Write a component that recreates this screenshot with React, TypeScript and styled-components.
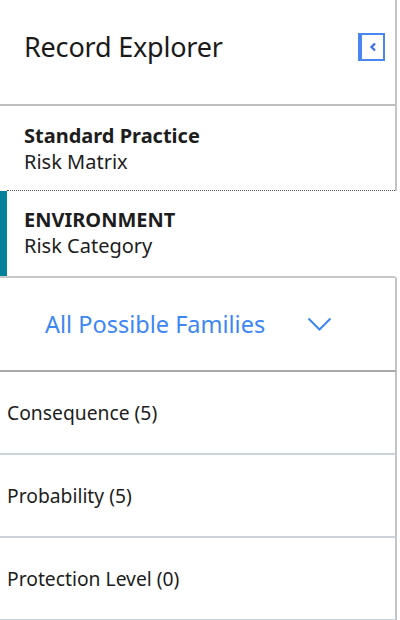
import React from 'react'
import styled, { createGlobalStyle } from 'styled-components'

const GlobalStyle = createGlobalStyle`
  html, body {
    margin: 0;
    padding: 0;
    background: #ffffff;
  }
  body {
    font-family: "Noto Sans", "Open Sans", sans-serif;
    color: #1d1d1d;
  }
`

const families = ['Consequence (5)', 'Probability (5)', 'Protection Level (0)']

const App = () => {
  return (
    <>
      <GlobalStyle />
      <Panel>
        <Header>
          <Title>Record Explorer</Title>
          <CollapseButton aria-label="Collapse">
            <svg width="8" height="10" viewBox="0 0 8 10">
              <path d="M6 1.5 L2.5 5 L6 8.5" fill="none" stroke="#3b6fe8" strokeWidth="2.2" />
            </svg>
          </CollapseButton>
        </Header>

        <Crumb $dotted>
          <CrumbTitle>Standard Practice</CrumbTitle>
          <CrumbSub>Risk Matrix</CrumbSub>
        </Crumb>
        <Crumb $selected>
          <CrumbTitle>ENVIRONMENT</CrumbTitle>
          <CrumbSub>Risk Category</CrumbSub>
        </Crumb>

        <FamilySelect>
          <FamilyLabel>All Possible Families</FamilyLabel>
          <svg width="25" height="14" viewBox="0 0 25 14">
            <path d="M1.5 1.5 L12.5 12.5 L23.5 1.5" fill="none" stroke="#3d87f5" strokeWidth="2" />
          </svg>
        </FamilySelect>

        <FamilyList>
          {families.map((f) => (
            <FamilyItem key={f}>{f}</FamilyItem>
          ))}
        </FamilyList>
      </Panel>
    </>
  )
}

export default App

const Panel = styled.div`
  width: 397px;
  height: 620px;
  display: flex;
  flex-direction: column;
  overflow: hidden;
`

const Header = styled.header`
  height: 106px;
  display: flex;
  align-items: center;
  justify-content: space-between;
  padding: 0 10px 12px 24px;
  box-sizing: border-box;
  border-right: 2px solid #c4c4c4;
  border-bottom: 2px solid #bdbdbd;
  flex-shrink: 0;
`

const Title = styled.h1`
  margin: 0;
  font-size: 27px;
  font-weight: 400;
  color: #1a1a1a;
  letter-spacing: -0.2px;
`

const CollapseButton = styled.button`
  width: 27px;
  height: 28px;
  padding: 0;
  margin-top: 2px;
  box-sizing: border-box;
  display: flex;
  align-items: center;
  justify-content: center;
  background: #fff;
  border: 2px solid #4a86f0;
  border-left-width: 4px;
  cursor: pointer;
`

const Crumb = styled.div<{ $selected?: boolean; $dotted?: boolean }>`
  position: relative;
  height: ${(p) => (p.$selected ? '87px' : '85px')};
  padding: 0 0 ${(p) => (p.$selected ? '2px' : '0')} 24px;
  box-sizing: border-box;
  display: flex;
  flex-direction: column;
  justify-content: center;
  border-right: 2px solid ${(p) => (p.$selected ? 'transparent' : '#c4c4c4')};
  border-bottom: ${(p) => (p.$selected ? '2px solid #c8c8c8' : 'none')};
  flex-shrink: 0;

  ${(p) =>
    p.$dotted &&
    `
    &::after {
      content: '';
      position: absolute;
      left: 7px;
      right: 0;
      bottom: 0;
      border-bottom: 1px dotted #555;
    }
  `}

  ${(p) =>
    p.$selected &&
    `
    &::before {
      content: '';
      position: absolute;
      left: 0;
      top: 0;
      bottom: 0;
      width: 7px;
      background: #06809b;
    }
  `}
`

const CrumbTitle = styled.div`
  font-size: 20px;
  font-weight: 700;
  line-height: 26px;
  color: #1d1d1d;
`

const CrumbSub = styled.div`
  font-size: 20px;
  font-weight: 400;
  line-height: 26px;
  color: #1d1d1d;
`

const FamilySelect = styled.div`
  height: 94px;
  display: flex;
  align-items: center;
  padding: 0 0 0 45px;
  gap: 42px;
  box-sizing: border-box;
  border-right: 2px solid #c4c4c4;
  border-bottom: 2px solid #a9a9a9;
  flex-shrink: 0;
`

const FamilyLabel = styled.span`
  font-size: 23.5px;
  color: #3d87f5;
`

const FamilyList = styled.div`
  display: flex;
  flex-direction: column;
`

const FamilyItem = styled.div`
  height: 83px;
  display: flex;
  align-items: center;
  padding-left: 7px;
  box-sizing: border-box;
  font-size: 19.3px;
  color: #1d1d1d;
  border-right: 2px solid #c4c4c4;
  border-bottom: 2px solid #cbd3da;
  flex-shrink: 0;
`
